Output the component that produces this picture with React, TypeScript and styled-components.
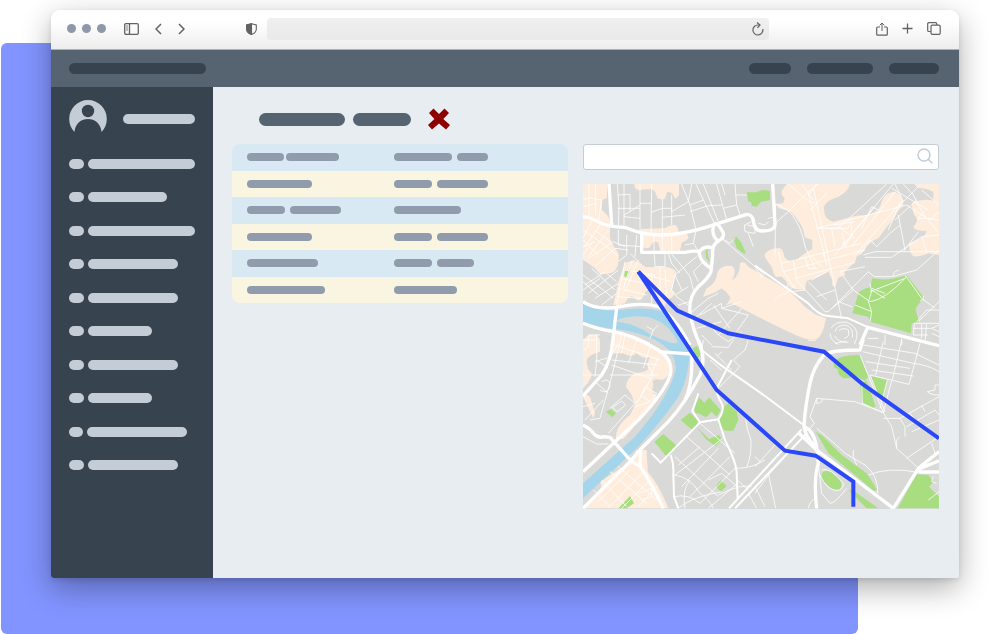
import React from 'react';
import styled, { createGlobalStyle } from 'styled-components';

const GlobalStyle = createGlobalStyle`
  * { box-sizing: border-box; }
  body { margin: 0; background: #fff; font-family: "Liberation Sans", Arial, sans-serif; }
  button { border: 0; padding: 0; background: none; cursor: pointer; }
  svg { display: block; }
`;

const Stage = styled.div`
  position: relative;
  min-height: 100vh;
  display: flex;
  padding: 10px 41px 56px 51px;
`;

const Backdrop = styled.div`
  position: absolute;
  inset: 43px 142px 0 1px;
  border-radius: 6px;
  background: #8294ff;
`;

const BrowserWindow = styled.div`
  position: relative;
  flex: 1;
  min-width: 0;
  display: flex;
  flex-direction: column;
  border-radius: 9px 9px 3px 3px;
  overflow: hidden;
  box-shadow: 0 10px 30px rgba(0, 0, 0, 0.32), 0 2px 5px rgba(0, 0, 0, 0.1);
`;

const BrowserBar = styled.div`
  height: 40px;
  display: flex;
  align-items: center;
  padding: 0 18px 2px 16px;
  color: #626262;
  background: linear-gradient(#ffffff 30%, #ededed);
  border-bottom: 1px solid #aab2b6;
`;

const Dots = styled.div`
  display: flex;
  gap: 6px;
`;

const Dot = styled.span`
  width: 9px;
  height: 9px;
  border-radius: 50%;
  background: #8d99a8;
`;

const Tools = styled.div<{ $gap: number; $left: number }>`
  display: flex;
  align-items: center;
  gap: ${(p) => p.$gap}px;
  margin-left: ${(p) => p.$left}px;
`;

const IconButton = styled.button`
  display: grid;
  place-items: center;
  color: inherit;
`;

const Address = styled.div`
  flex: 1;
  height: 22px;
  display: flex;
  align-items: center;
  margin: 0 107px 0 10px;
  padding-right: 5px;
  border-radius: 4px;
  background: linear-gradient(#f0f0f0, #e9e9e9);
`;

const BareInput = styled.input`
  flex: 1;
  min-width: 0;
  height: 20px;
  padding: 0 8px;
  border: 0;
  outline: 0;
  background: none;
  font: 12px "Liberation Sans", Arial, sans-serif;
`;

const Header = styled.header`
  height: 37px;
  display: flex;
  align-items: center;
  justify-content: space-between;
  padding: 0 20px 0 18px;
  background: #566471;
`;

const HeaderLinks = styled.nav`
  display: flex;
  gap: 16px;
`;

const Pill = styled.span<{ $w: number; $h: number; $color: string }>`
  display: block;
  flex: none;
  width: ${(p) => p.$w}px;
  height: ${(p) => p.$h}px;
  border-radius: 7px;
  background: ${(p) => p.$color};
`;

const Body = styled.div`
  flex: 1;
  display: flex;
`;

const Sidebar = styled.aside`
  width: 162px;
  flex: none;
  padding: 13px 18px;
  background: #37434e;
`;

const Profile = styled.div`
  height: 38px;
  display: flex;
  align-items: center;
  gap: 16px;
`;

const Menu = styled.ul`
  height: 335px;
  display: grid;
  grid-auto-rows: 1fr;
  margin: 9px 0 0;
  padding: 0;
  list-style: none;
`;

const MenuLink = styled.a`
  height: 100%;
  display: flex;
  align-items: center;
  gap: 4px;
`;

const Main = styled.main`
  flex: 1;
  min-width: 0;
  padding: 21px 20px 21px 19px;
  background: #e8edf1;
`;

const TitleRow = styled.div`
  height: 22px;
  display: flex;
  align-items: center;
  gap: 17px;
  padding-left: 27px;
  margin-bottom: 14px;
`;

const Title = styled.div`
  display: flex;
  gap: 8px;
`;

const Columns = styled.div`
  display: grid;
  grid-template-columns: minmax(0, 336fr) minmax(0, 356fr);
  align-items: start;
  gap: 15px;
`;

const Table = styled.table`
  width: 100%;
  height: 159px;
  table-layout: fixed;
  border-collapse: collapse;
  border-radius: 8px;
  overflow: hidden;
`;

const Row = styled.tr`
  background: #d8e9f3;
  &:nth-child(even) { background: #faf5e0; }
`;

const Cell = styled.td`
  padding: 0 0 0 15px;
  vertical-align: middle;
  &:first-child { width: 147px; }
`;

const CellBars = styled.div<{ $gap: number }>`
  display: flex;
  gap: ${(p) => p.$gap}px;
`;

const MapColumn = styled.div`
  display: grid;
  gap: 14px;
`;

const Search = styled.label`
  height: 26px;
  display: flex;
  align-items: center;
  padding: 0 5px 2px 0;
  border: 1px solid #c3cdd8;
  border-radius: 3px;
  background: #fff;
  color: #c3cdd8;
`;

const MapDrawing = styled.svg`
  width: 100%;
  height: auto;
`;

/* The map is drawn as four sheets; each carries its own origin. */
type Sheet = { at: string; peach: string; green: string; streets: string; lanes: string; roads: string };

const sheets: Sheet[] = [
  {
    at: 'translate(-24 -27)',
    peach:
      'M24,27H97L95,70 82,75 80,105Q100,118 105,140L105,190Q115,215 130,235Q135,275 115,292Q100,298 75,297L60,280 40,265 24,255Z M178,27H312V60Q305,73 298,68Q295,50 276,50Q272,75 262,73Q245,72 245,62Q240,42 225,42L190,45 180,40Z M197,162L270,160Q285,148 300,150Q310,155 310,170L335,178Q345,186 335,195L320,203 315,227H255L250,205Q240,190 225,215Q215,225 203,215Z M150,265L175,255 215,277 270,275Q300,280 303,292L290,345Q305,355 290,368L278,372 270,392 255,390 240,350Q225,335 210,352Q200,385 182,372Q165,350 150,385L115,390 125,345 130,320Z M385,362L395,340Q425,325 428,290Q440,270 470,273Q488,285 470,318Q495,300 495,265Q505,255 520,275L640,345 690,395 720,418 753,430Q745,480 725,493Q700,500 640,470L570,436 470,385 452,390Q470,370 465,365Q455,350 440,340Q420,355 385,365Z',
    green:
      'M515,52L545,52 560,45 585,47V75L558,80 545,95 530,92 528,80 520,80Z M475,190L485,185 498,202 512,232 508,237 485,220Z M392,225L398,222V242L407,262 393,250Z M150,287L167,283 155,310 147,303Z',
    streets:
      'M24,75L42,68 80,75 M42,27V125 M62,27V120 M80,75L70,140 M24,95L65,85 M147,27V150 M128,60L165,58V110L147,120 M127,27L132,95 130,150 M147,125L195,130 M128,100H195 M195,27V178 M230,27L228,178 M262,72V178 M165,110L195,90 M195,85H230 M228,112L262,100H290V150 M262,127L330,120 M290,110L340,80 350,27 M290,60V110 M320,27L345,90 363,165 M345,90L385,75 M363,27L418,145 M385,27L430,140 M425,27L445,100 455,135 M345,110L400,92 440,90 M445,100L485,90 480,27 M485,90L495,120 M480,60H515 M450,60L440,27 M363,165L355,205 375,235 M355,205L330,210 M290,178V228 M262,180V228 M237,180V228 M24,165L90,210 M24,195L70,240 M50,140L24,190 M75,150L30,215 M100,165L40,245 M24,215L60,200 M40,250L115,200 150,215 M60,165L105,200 M90,210L130,245 M60,275L120,220 160,225 M24,240L50,205 M155,180V240L130,260 M185,180L180,245 M130,165V210L200,215 M165,235L200,270 M24,300L85,345 115,370 M30,330L90,290 M40,355L130,285 M24,345L75,310 M60,370L130,325 M80,390L125,355 M50,280L120,345 M24,320L70,360 M95,295L125,320 M150,260L125,385 M170,260L145,340 M190,255L150,350 M150,285L240,300 M140,310L230,330 M130,340L215,360 M125,365L200,370 M230,300V385 M255,280V345 M270,285L275,365 M215,300L290,320 M238,238L240,275 270,275 M270,235V275 M290,238L325,278 365,245 M325,278L300,300 290,345 305,365 345,395 M325,278L345,305 355,345 M300,300L320,345 M280,235L290,265 315,295 M440,190L570,300 M440,190L465,205 480,190 M515,150L540,155V175L510,170 508,150 530,140 M520,175L535,215 M385,260L355,290 370,320 M300,360L340,335 M310,390L345,380 M345,415L400,370 430,355 M360,430L410,385 M375,420L440,385V400L500,380 M415,390L465,460 M440,400L520,420 485,470 M395,440L430,480 500,400 M365,460L440,440 M380,480L410,510 M430,480L460,500 500,470 M215,455L235,465 250,450 M235,465L225,490',
    lanes: '',
    roads:
      'M24,125Q55,130 75,143Q100,155 150,157Q200,180 255,180Q320,180 400,155L515,118Q530,118 535,135Q538,168 560,168Q603,168 600,145L593,27 M102,27L110,150 M200,178V232H330Q365,225 375,232 M418,145Q405,180 430,198Q455,185 440,165Q430,145 418,145 M430,198Q410,210 413,240Q410,270 408,290Q400,310 370,335Q340,365 345,415Q355,470 378,515 M408,280Q375,260 372,232Q385,210 413,218 M24,380Q60,405 125,397Q200,380 250,395Q300,425 345,510 M125,398L112,510',
  },
  {
    at: 'translate(516 -27)',
    peach:
      'M95,27H285Q280,50 250,65Q215,75 207,95Q205,135 235,140Q270,130 305,122L340,120Q375,110 380,80Q390,50 420,50Q440,55 445,90Q425,110 418,130L400,150 370,190Q340,200 325,230L305,245 300,262 268,290 270,300 250,308Q245,320 242,333Q230,340 232,315L220,290 190,305 155,318Q150,335 150,345L120,342Q95,335 95,320L80,305H62Q55,295 50,275Q30,250 28,240Q40,218 75,220Q85,225 88,245Q100,262 120,258L150,235 172,222V195L150,187Q145,145 105,108L72,100 62,87 85,85Q85,75 90,70Q75,60 82,45Z M478,27H552V240L520,235Q490,248 475,243Q460,230 463,205L485,195Q515,185 513,168Q480,168 475,155Q495,135 478,120Q465,90 475,80Q515,70 535,77V50L515,42 488,38Z',
    green: 'M352,310Q400,320 455,300L508,370Q480,395 482,405L492,440 470,445 468,475 345,440 340,425 292,415 312,350Q330,340 345,337Z',
    streets:
      'M62,87L60,240 M62,87L102,108 155,55 190,27 M60,145L102,108 M102,108Q140,150 150,215L180,278 M100,27L163,80 185,85 215,55 M140,27L175,75 M175,40L260,430 M160,55L210,245 M183,90L165,105 M160,60L185,27 M190,160H250L395,27 M185,160L455,90 M235,150L300,140 M290,140L280,160 210,160 M230,160L240,215 M250,155L300,190 M80,265L320,205 M85,290L330,225 M120,310L300,262 M70,230L85,290 120,340 M115,258L125,312 M150,245L160,280H187 M165,240L200,275 M205,235L215,270 M262,175L270,215 300,165 415,27 M240,240L360,95 M260,210L290,185V150 M290,215L420,50 M300,240L445,75 M320,160L350,95 370,105 M410,40L520,105 M445,27L475,60 500,110 552,175 M490,35L430,95 400,165 M430,120L450,225 M420,135L485,75 M455,90L515,130 552,135 M500,45L552,90 M505,110L490,130H530L552,110 M315,240L345,195 365,215 405,175 435,150 M325,240L360,230H552 M330,247H410L500,185 552,180 M445,230L490,170 M500,185L515,230 M120,310L210,410 220,410 340,290 358,305H412L485,285 552,225 M160,320L215,375 M185,365L240,345 M170,315L215,290 M255,290L295,345 250,385 230,400 M255,290L330,275 M250,380L290,395 M295,345L345,380Q390,375 455,305 M345,325L350,350 340,380 350,410 345,440 M350,340L390,355 M345,350L450,310 M350,345L390,370 M300,390L350,410 M415,305Q412,290 432,285 M450,300L500,370 540,400 M552,380L490,440 M505,362V372L495,378 M485,440L515,405H552 M478,445H552 M475,460H530L552,470 M475,480H520 M478,445L475,480 M500,445V490 M515,445L510,500 M420,27L445,80 M530,460L552,450 M530,475L552,485 M0,280L20,300V310 M60,375Q75,355 90,358L120,330 M95,330L105,350 150,345 M390,480V510 M440,490V510 M338,490H370 M10,145L30,150 40,140 M40,130L60,125',
    lanes:
      'M0,272L160,385Q190,420 215,422L280,430 340,457',
    roads: '',
  },
  {
    at: 'translate(-24 468)',
    peach:
      'M40,-15Q75,-20 75,5V35Q35,45 35,65Q37,90 50,100Q50,120 24,145V0Z M24,160L45,170 60,220 55,235 24,170Z M115,-25Q185,-20 230,15Q280,45 285,90Q280,115 260,120L230,115Q240,140 230,150L247,170Q205,230 145,297H123Q120,260 165,225L180,195 170,165 153,140Q155,115 180,100Q210,97 220,88Q215,70 225,50Q205,60 185,40Q165,55 145,40H110Z M122,-100H140L135,-125H122Z M185,330H215L218,395Q250,430 280,505H30L80,440 75,425 160,370Z',
    green:
      'M358,205L372,172 388,188 403,172 437,210 425,230 410,215 393,232 375,222 360,218Z M317,240L345,218 372,245 352,270Z M238,305L265,282 308,320 275,350Z M430,240L445,202 460,190 485,215 490,240 475,272 450,272 430,255Z M365,262L402,297 432,285 442,300 422,318 395,300Z M422,438L437,421 455,438 437,455Z M93,215L107,207 123,220 112,232Z M130,505L165,468 177,490 155,505Z M352,25L367,18 377,40 368,60Z',
    streets:
      'M40,-15H75 M40,-15V20L24,30 M65,-18V60L60,110 M24,0H65 M24,105H80 M105,105H250 M60,65L110,50 M65,60L100,85 M60,125L100,160 M80,125Q105,110 105,140Q95,165 75,150 M110,110L75,235 45,240 M24,200L60,190 M85,180L30,240 M140,-15L110,110 M150,-20L140,40 M165,-15L225,10 M120,15L255,60 M110,60L250,75 M110,75L240,120 M185,0L160,70 M225,20L205,85 M250,50L225,110 M215,70L235,105 M105,55L130,10 M195,175L210,140 245,160 225,185 195,165 M185,190L235,105 M180,200L225,185 M150,165L180,190 100,280 M105,205L150,165 M112,203L140,183 152,195 127,215Z M24,290L65,312H100 M105,395L215,490 M80,420L155,500 M55,450L105,500 M130,380L245,480 M165,390L65,490 M210,390L100,505 M225,420L140,505 M245,440L190,500 M190,460L230,445V470L200,480 M300,350L430,470 M335,290L465,405 M375,250L480,340 M310,375L375,320 M300,405L450,290 M320,440L430,325 M345,470L465,350 M375,490L485,380 M400,505L488,430 M297,405Q345,410 375,460Q400,475 415,505 M297,470Q340,460 375,490 M310,505Q350,470 440,455 M345,420Q320,450 330,505 M400,420L440,400 487,440 M485,385Q530,385 570,360 M512,235Q515,270 528,300Q530,350 515,380 M425,150L495,80 475,60 510,30 520,0 M380,30L385,0 M410,20L460,22 475,0 M420,40L470,90 M425,50L440,35 M405,60L440,90 M430,465Q500,430 530,440 M487,420L520,450 M540,440L570,500 M520,460L545,505',
    lanes:
      'M380,30L430,70 570,168 690,258 M470,60L425,145 M370,160L352,213 375,247 430,238Q450,210 440,190Q425,165 425,150 M375,247L257,368 230,340 M430,238L450,300Q485,370 485,400L488,475 M287,345Q297,370 295,400L297,470 310,505 M462,505L680,268 M480,505L692,283',
    roads:
      'M113,0Q110,60 80,105L24,168 M24,-50Q75,-30 115,-25Q175,-15 250,30Q292,55 287,100Q275,150 190,240L24,395 M250,35L345,42 M350,30Q355,130 330,180 M370,0Q395,60 375,105Q330,190 280,245L195,330 165,365 24,505 M24,255Q45,265 60,285Q75,295 85,290L105,292 170,365 195,378 M197,335L195,378Q230,430 265,505',
  },
  {
    at: 'translate(516 468)',
    peach: 'M160,0H182V3H160Z',
    green:
      'M235,70Q245,45 315,45L340,110 330,122 300,107Q275,120 260,112Q245,100 250,88L238,83Z M348,108L397,120 383,180 370,170Z M315,130L335,123 362,200 350,205 320,185Z M182,275L200,285 260,345 335,400 367,450 355,452 300,405 220,340Z M203,397Q215,388 230,397L253,417Q265,435 254,448Q235,452 225,442L205,424Q195,410 203,397Z M280,450L300,455 370,505H335Z M485,403L520,405 535,425 522,440 552,470V505H428Z',
    streets:
      'M323,35L475,70Q520,75 552,95 M325,15L480,40 552,75 M332,65L465,85 M350,90L475,108 M345,105L462,133 495,10 M385,5L362,105 M440,0L412,120 M315,45L385,218 M345,105L390,215 M397,120L375,205 M410,122L385,218 M320,125L322,190 385,218 M185,175L300,185 385,218 M185,175V190Q202,190 203,177 M185,175L165,230 178,250 165,265 M385,218L410,260 425,325 485,380 M385,235H435L552,170 M435,235L450,260V290 M455,260L540,210 552,225 M470,275L552,240 M490,250L510,270 M465,220L480,240 M500,195L510,215 M552,135H540V150L517,155Q525,165 552,165 M425,325V300L435,290 M455,355L552,290 M530,310L540,340 M340,405Q400,380 490,397 M185,265Q240,310 270,340L330,375Q370,405 368,460 M295,330V350L305,375 M190,370L200,460 225,490Q240,490 275,445 M200,390Q225,380 265,430Q265,450 245,452Q215,450 195,405 M160,505Q165,480 183,475 M0,350L15,365 M0,380L60,315 M40,400L62,505 M0,460L45,400 90,350 M545,430L530,425 535,410 M520,480L552,455',
    lanes: '',
    roads:
      'M325,-2L315,30Q240,30 210,42Q175,80 165,130Q150,200 147,260Q150,290 185,325 M315,15L338,-38 552,17 M132,280L185,330 415,505 M147,260Q175,270 185,320L190,370Q175,420 185,505 M415,505Q450,450 490,385L552,335 M490,388L552,362 M490,396H552',
  },
];

const CityMap = () => (
  <MapDrawing viewBox="0 0 1068 975" role="img" aria-label="Route map">
    <rect width="1068" height="975" fill="#d9dad8" />
    {sheets.map((s) => <path key={s.at} transform={s.at} d={s.peach} fill="#feeddd" />)}
    <g transform="translate(-24 -27)">
      <path
        fill="#a5d5eb"
        d="M24,380Q75,408 125,406Q195,395 255,407Q305,430 345,500Q345,605 310,665Q270,725 190,815L24,970V925L180,785Q285,665 303,580Q300,535 265,510Q215,475 125,463Q75,457 24,440Z"
      />
      <path fill="#d9dad8" d="M127,435Q165,420 215,425Q280,440 308,500Q300,510 280,500Q230,485 205,465Q165,443 127,440Z" />
    </g>
    {sheets.map((s) => <path key={s.at} transform={s.at} d={s.green} fill="#a8dd80" />)}
    <g fill="none" stroke="#fff" strokeLinejoin="round">
      {sheets.map((s) => <path key={s.at} transform={s.at} d={s.streets} strokeWidth="3" opacity="0.8" />)}
      <path
        transform="translate(516 -27)"
        strokeWidth="3"
        opacity="0.8"
        d="M228,460Q240,438 275,442Q312,455 305,490L298,508 M225,475Q228,500 250,508 M240,470Q245,450 272,450Q298,460 292,488 M238,482Q248,503 280,502 M252,468Q262,455 280,465Q287,485 268,490 M240,505L275,498"
      />
      {sheets.map((s) => <path key={s.at} transform={s.at} d={s.lanes} strokeWidth="6" />)}
      {sheets.map((s) => <path key={s.at} transform={s.at} d={s.roads} strokeWidth="10" />)}
    </g>
    <g fill="none" stroke="#2a48f8" strokeWidth="12">
      <path d="M166,263L283,380 436,448 723,503 838,600 1068,763" />
      <path d="M166,263L401,618 606,800 698,815 811,893V968" />
    </g>
  </MapDrawing>
);

const line = { fill: 'none', stroke: 'currentColor', strokeWidth: 1.3 } as const;

const SidebarIcon = () => (
  <svg width="15" height="12" viewBox="0 0 15 12" {...line}>
    <rect x="0.7" y="0.7" width="13.6" height="10.6" rx="1.2" />
    <path d="M5.5,1V11" />
    <path d="M2,3H4M2,5H4M2,7H4" strokeWidth="0.8" />
  </svg>
);
const ChevronIcon = ({ d }: { d: string }) => (
  <svg width="7" height="12" viewBox="0 0 7 12" {...line} strokeWidth="1.5"><path d={d} /></svg>
);
const ShieldIcon = () => (
  <svg width="11" height="12" viewBox="0 0 11 12" {...line} strokeWidth="1.1">
    <path d="M5.5,0.7L10.3,2V6.5Q10,10 5.5,11.4Q1,10 0.7,6.5V2Z" />
    <path d="M5.5,0.7V11.4Q1,10 0.7,6.5V2Z" fill="currentColor" />
  </svg>
);
const ReloadIcon = () => (
  <svg width="12" height="14" viewBox="0 0 12 14" {...line} strokeWidth="1.2">
    <path d="M10.8,7A5,5 0 1 1 6,3H8" /><path d="M5,0.5L8,3 5.4,5.8" />
  </svg>
);
const ShareIcon = () => (
  <svg width="12" height="14" viewBox="0 0 12 14" {...line} strokeWidth="1.2">
    <path d="M4,5H1.6Q0.7,5 0.7,6V12.2Q0.7,13.2 1.6,13.2H10.4Q11.3,13.2 11.3,12.2V6Q11.3,5 10.4,5H8" />
    <path d="M6,9V1M3.8,3.2L6,1 8.2,3.2" strokeWidth="1" />
  </svg>
);
const PlusIcon = () => (
  <svg width="11" height="11" viewBox="0 0 11 11" {...line}><path d="M5.5,0.5V10.5M0.5,5.5H10.5" /></svg>
);
const TabsIcon = () => (
  <svg width="14" height="13" viewBox="0 0 14 13" {...line} strokeWidth="1.2">
    <rect x="4" y="3.2" width="9.2" height="9.2" rx="1.3" />
    <path d="M3.8,9.5H2Q0.7,9.5 0.7,8.4V1.7Q0.7,0.6 2,0.6H8.6Q9.8,0.6 9.8,1.7V3" />
  </svg>
);
const AvatarIcon = () => (
  <svg width="38" height="38" viewBox="0 0 38 38">
    <path d="M5.5,32A18.8,18.8 0 1 1 32.5,32C31.5,14.5 6.5,14.5 5.5,32Z" fill="#c4ccd5" />
    <circle cx="19" cy="11" r="6.2" fill="#37434e" />
  </svg>
);
const CrossIcon = () => (
  <svg width="22" height="22" viewBox="0 0 22 22" fill="#8e0000">
    <path d="M0,17L6.4,11 1,5 5.5,0.5 11,6 16.5,0.5 21,5 15.3,11 22,17 18,21.5 11,15.5 4,21.5Z" />
  </svg>
);
const SearchIcon = () => (
  <svg width="16" height="16" viewBox="0 0 16 16" {...line} strokeWidth="1.5">
    <circle cx="7" cy="7" r="6" /><path d="M11.2,11.2L15.3,15.3" />
  </svg>
);

const menu = [
  [15, 107], [15, 79], [15, 107], [15, 90], [15, 90],
  [15, 64], [15, 90], [15, 64], [14, 100], [15, 90],
];

const rows: { bars: number[]; gap: number }[][] = [
  [{ bars: [37, 53], gap: 2 }, { bars: [58, 31], gap: 5 }],
  [{ bars: [65], gap: 5 }, { bars: [38, 51], gap: 5 }],
  [{ bars: [38, 51], gap: 5 }, { bars: [67], gap: 5 }],
  [{ bars: [65], gap: 5 }, { bars: [38, 51], gap: 5 }],
  [{ bars: [71], gap: 5 }, { bars: [38, 37], gap: 5 }],
  [{ bars: [78], gap: 5 }, { bars: [63], gap: 5 }],
];

export default function App() {
  return (
    <>
      <GlobalStyle />
      <Stage>
        <Backdrop />
        <BrowserWindow>
          <BrowserBar>
            <Dots><Dot /><Dot /><Dot /></Dots>
            <Tools $gap={16} $left={18}>
              <IconButton aria-label="Sidebar"><SidebarIcon /></IconButton>
              <IconButton aria-label="Back"><ChevronIcon d="M6,1L1,6 6,11" /></IconButton>
              <IconButton aria-label="Forward"><ChevronIcon d="M1,1L6,6 1,11" /></IconButton>
            </Tools>
            <Tools $gap={0} $left={61}>
              <IconButton aria-label="Privacy"><ShieldIcon /></IconButton>
            </Tools>
            <Address>
              <BareInput aria-label="Address" />
              <IconButton aria-label="Reload"><ReloadIcon /></IconButton>
            </Address>
            <Tools $gap={14} $left={0}>
              <IconButton aria-label="Share"><ShareIcon /></IconButton>
              <IconButton aria-label="New tab"><PlusIcon /></IconButton>
              <IconButton aria-label="Tabs"><TabsIcon /></IconButton>
            </Tools>
          </BrowserBar>
          <Header>
            <Pill $w={137} $h={11} $color="#37434e" />
            <HeaderLinks>
              {[42, 66, 50].map((w) => (
                <a key={w} href="#section" aria-label="Section"><Pill $w={w} $h={11} $color="#37434e" /></a>
              ))}
            </HeaderLinks>
          </Header>
          <Body>
            <Sidebar>
              <Profile>
                <AvatarIcon />
                <Pill $w={72} $h={10} $color="#c4ccd5" />
              </Profile>
              <Menu>
                {menu.map(([mark, label], i) => (
                  <li key={i}>
                    <MenuLink href="#item" aria-label={`Item ${i + 1}`}>
                      <Pill $w={mark} $h={10} $color="#c4ccd5" />
                      <Pill $w={label} $h={10} $color="#c4ccd5" />
                    </MenuLink>
                  </li>
                ))}
              </Menu>
            </Sidebar>
            <Main>
              <TitleRow>
                <Title>
                  <Pill $w={86} $h={13} $color="#566471" />
                  <Pill $w={58} $h={13} $color="#566471" />
                </Title>
                <IconButton aria-label="Close"><CrossIcon /></IconButton>
              </TitleRow>
              <Columns>
                <Table>
                  <tbody>
                    {rows.map((cells, r) => (
                      <Row key={r}>
                        {cells.map((cell, c) => (
                          <Cell key={c}>
                            <CellBars $gap={cell.gap}>
                              {cell.bars.map((w, b) => <Pill key={b} $w={w} $h={8} $color="#909cab" />)}
                            </CellBars>
                          </Cell>
                        ))}
                      </Row>
                    ))}
                  </tbody>
                </Table>
                <MapColumn>
                  <Search>
                    <BareInput type="text" aria-label="Search" />
                    <SearchIcon />
                  </Search>
                  <CityMap />
                </MapColumn>
              </Columns>
            </Main>
          </Body>
        </BrowserWindow>
      </Stage>
    </>
  );
}
